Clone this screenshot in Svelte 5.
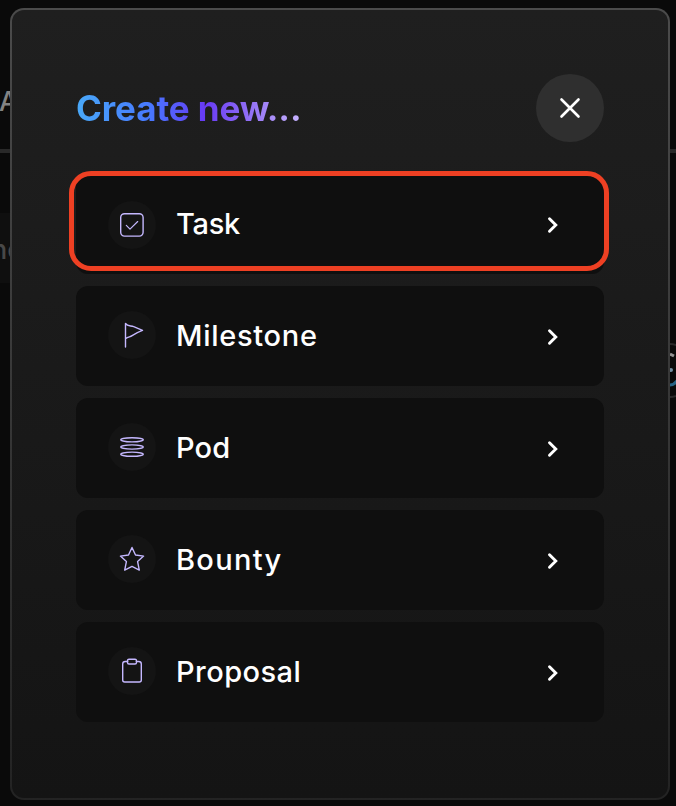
<script>
  const items = [
    { name: 'Task', spacing: -0.3, icon: 'task' },
    { name: 'Milestone', spacing: 0.7, icon: 'flag' },
    { name: 'Pod', spacing: 0.2, icon: 'pod' },
    { name: 'Bounty', spacing: 1.3, icon: 'star' },
    { name: 'Proposal', spacing: 0.45, icon: 'clipboard' }
  ];
</script>

<main class="page">
  <div class="backdrop" aria-hidden="true">
    <div class="rule"></div>
    <div class="band"></div>
    <span class="behind letter">A</span>
    <span class="behind word">ne</span>
    <svg class="avatar" width="12" height="64" viewBox="0 0 12 64" fill="none">
      <path d="M0 5q6 0 12 4M0 58q6 0 12-4" stroke="#292929" stroke-width="2" />
      <path d="M0 15l4 2" stroke="#929292" stroke-width="3" />
      <circle cx="1" cy="31" r="2" fill="#718da0" />
      <path d="M0 46q4 0 7-4" stroke="#286385" stroke-width="3" />
    </svg>
  </div>
  <section class="modal">
    <header>
      <h1>Create new...</h1>
      <button class="close" aria-label="Close">
        <svg width="24" height="24" viewBox="0 0 24 24" fill="none" stroke="#fff" stroke-width="2.6" stroke-linecap="round">
          <path d="M3.5 3.5l17 17M20.5 3.5l-17 17" />
        </svg>
      </button>
    </header>
    <div class="list">
      {#each items as item, i}
        <button class="card" class:selected={i === 0}>
          <span class="badge" class:raised={i > 0}>
            <svg width="28" height="28" viewBox="0 0 28 28" fill="none" stroke="#c5b8ff" stroke-width="1.4" stroke-linejoin="round" stroke-linecap="round">
              {#if item.icon === 'task'}
                <rect x="2.7" y="2.7" width="22.4" height="22.4" rx="3.8" />
                <path d="M8.3 14.4l3.7 3.8 7.7-7.7" stroke-width="1.15" />
              {:else if item.icon === 'flag'}
                <path d="M7.5 26V2.5c2 2.7 4.5 2.1 8.2 3.2l8.8 3.7c-4.1 1.4-6.2 2.6-10.4 5.3-2.2 1.4-4 .9-6.6 3" />
              {:else if item.icon === 'pod'}
                <ellipse cx="14" cy="6.8" rx="11.3" ry="2.1" />
                <ellipse cx="14" cy="14" rx="11.3" ry="2.1" />
                <ellipse cx="14" cy="21.2" rx="11.3" ry="2.1" />
              {:else if item.icon === 'star'}
                <path d="M14 2.5L17.500 10l8.100 1.100-6 5.500 1.700 8.500L14 21.400l-7.300 3.700 1.700-8.500-6-5.500L10.500 10Z" />
              {:else}
                <path d="M9.700 4.500H7.200Q4.700 4.500 4.700 7v16q0 2 2 2h14.600q2 0 2-2V7q0-2.500-2.500-2.500h-2.500" />
                <path d="M11 2.200h6q1.500 0 1.500 1.500v1.800q0 1.500-1.500 1.500h-6q-1.500 0-1.500-1.500V3.700q0-1.500 1.500-1.500Z" />
              {/if}
            </svg>
          </span>
          <span class="label" style:letter-spacing="{item.spacing}px">{item.name}</span>
          <svg class="chevron" width="14" height="18" viewBox="0 0 14 18" fill="none" stroke="#fff" stroke-width="2.9" stroke-linecap="round" stroke-linejoin="miter">
            <path d="M3.500 2.700L9.800 9l-6.300 6.300" />
          </svg>
        </button>
      {/each}
    </div>
  </section>
</main>

<style>
  :global(body) { background: #0a0a0a; }
  .page { position: relative; box-sizing: border-box; height: 806px; padding: 8px 6px 6px 10px; overflow: hidden; background: #0a0a0a; font-family: Inter, sans-serif; }
  .backdrop { position: absolute; inset: 0; }
  .rule { position: absolute; top: 149px; width: 100%; height: 4px; background: #292929; }
  .band { position: absolute; top: 213px; width: 12px; height: 70px; background: #0f0f0f; }
  .behind { position: absolute; line-height: 1; font-weight: 500; }
  .letter { left: -1px; top: 88px; font-size: 27px; color: #838383; }
  .word { left: -9px; top: 236px; font-size: 27px; color: #484848; }
  .avatar { position: absolute; left: 670px; top: 339px; }
  .modal { position: relative; box-sizing: border-box; width: 660px; height: 792px; padding: 64px; border: 2px solid transparent; border-radius: 14px; background: linear-gradient(#1f1f1f, #141414) padding-box, linear-gradient(#4b4b4b, #232323) border-box; }
  header { display: flex; align-items: center; justify-content: space-between; height: 68px; }
  h1 { margin: 0; font-size: 35px; line-height: 46px; font-weight: 700; letter-spacing: -0.1px; color: transparent; background: linear-gradient(90deg, #49a9f8 0%, #4779ff 32%, #673af4 57%, #9473f5 78%, #c8b5ff 100%); background-clip: text; -webkit-background-clip: text; }
  button { border: 0; padding: 0; font-family: inherit; color: #fff; }
  .close { display: flex; align-items: center; justify-content: center; width: 68px; height: 68px; border-radius: 50%; background: #2f2f2f; }
  .list { display: flex; flex-direction: column; gap: 12px; padding-top: 32px; }
  .card { position: relative; display: flex; align-items: center; box-sizing: border-box; width: 528px; height: 100px; padding: 0 44px 0 31.5px; border-radius: 12px; background: #0f0f0f; text-align: left; }
  .selected::after { content: ''; position: absolute; box-sizing: border-box; left: -7px; top: -3px; width: 540px; height: 100px; border: 5px solid #ee4023; border-radius: 22px; }
  .badge { display: flex; align-items: center; justify-content: center; width: 48px; height: 48px; margin-top: 1px; border-radius: 50%; background: #141414; }
  .raised { margin: 0 0 2px; }
  .label { margin-left: 20.5px; font-size: 29px; line-height: 40px; font-weight: 550; }
  .chevron { margin-left: auto; margin-top: 1px; }
</style>
